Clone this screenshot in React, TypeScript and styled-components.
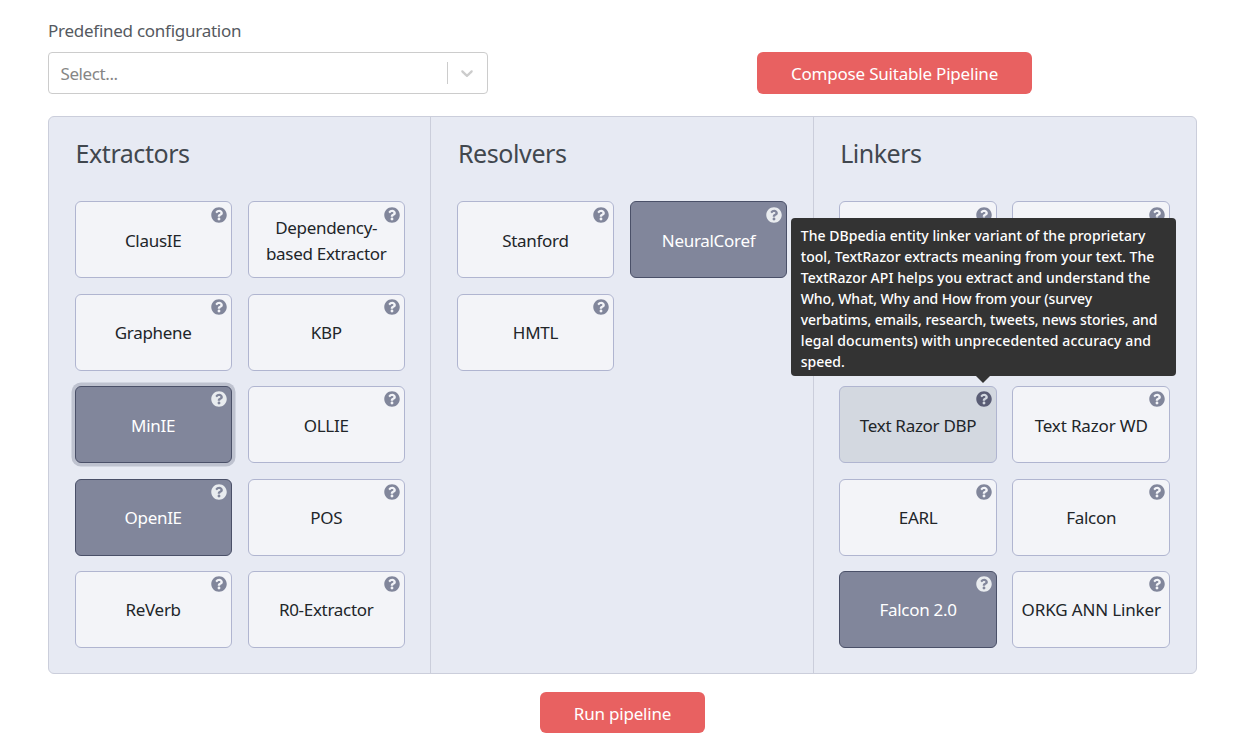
import React from "react";
import styled, { createGlobalStyle, css } from "styled-components";
import { FaQuestionCircle } from "react-icons/fa";

const GlobalStyle = createGlobalStyle`
  * { box-sizing: border-box; }
  body {
    margin: 0;
    background: #fff;
    color: #212529;
    font-family: "Noto Sans", "Open Sans", sans-serif;
    font-size: 17px;
  }
`;

const Page = styled.main`
  width: 1239px;
  height: 753px;
  padding: 17px 42px 0 48px;
  overflow: hidden;
  display: flex;
  flex-direction: column;
`;

const Toolbar = styled.div`
  display: flex;
  justify-content: space-between;
  align-items: flex-end;
  height: 77px;
  padding-right: 165px;
`;

const Field = styled.div`
  width: 440px;
`;

const Label = styled.label`
  display: block;
  height: 35px;
  line-height: 27px;
  color: #555960;
  letter-spacing: -0.26px;
`;

const Select = styled.div`
  display: flex;
  align-items: center;
  height: 42px;
  border: 1px solid #ccc;
  border-radius: 4px;
`;

const Placeholder = styled.span`
  flex: 1;
  padding-left: 11.5px;
  color: #868686;
  letter-spacing: -0.4px;
`;

const Separator = styled.span`
  width: 1px;
  height: 22px;
  background: #ccc;
`;

const Indicator = styled.svg`
  width: 20px;
  height: 20px;
  margin: 0 10px 0 9px;
  fill: #ccc;
`;

const Button = styled.button<{ $width: number; $height: number; $spacing: number }>`
  width: ${(p) => p.$width}px;
  height: ${(p) => p.$height}px;
  padding: 1px 0 0;
  border: 0;
  border-radius: 6px;
  background: #e86161;
  color: #fff;
  font: inherit;
  letter-spacing: ${(p) => p.$spacing}px;
`;

const Panel = styled.section`
  display: grid;
  grid-template-columns: repeat(3, 1fr);
  height: 558px;
  margin-top: 22px;
  border: 1px solid #cbcedb;
  border-radius: 6px;
  background: #e7eaf3;
`;

const Tiles = styled.div`
  display: grid;
  grid-template-columns: 1fr 1fr;
  grid-auto-rows: 77px;
  gap: 15.45px 16px;
`;

const Column = styled.div`
  padding: 17.2px 25.6px 0;
  &:not(:last-child) { border-right: 1px solid #cbcedb; }
  &:last-child { padding-right: 26px; }
  &:last-child ${Tiles} { column-gap: 15.6px; }
`;

const Heading = styled.h2<{ $spacing: number }>`
  height: 67px;
  margin: 0 0 0 1px;
  line-height: 38px;
  font-size: 25px;
  font-weight: 400;
  color: #41474e;
  letter-spacing: ${(p) => p.$spacing}px;
`;

type State = "idle" | "selected" | "hovered";

const Tile = styled.div<{ $state: State; $focus?: boolean; $spacing: number }>`
  position: relative;
  display: flex;
  align-items: center;
  justify-content: center;
  padding-top: 2px;
  border: 1px solid #b0b5d0;
  border-radius: 6px;
  background: #f3f4f8;
  line-height: 26px;
  text-align: center;
  white-space: pre;
  letter-spacing: ${(p) => p.$spacing}px;
  ${(p) => p.$state === "selected" && css`
    border-color: #4a5068;
    background: #81869b;
    color: #fff;
  `}
  ${(p) => p.$state === "hovered" && css`background: #d3d8e0;`}
  ${(p) => p.$focus && css`box-shadow: 0 0 0 3.5px #bec2cf;`}
`;

const Help = styled.span<{ $state: State }>`
  position: absolute;
  top: 4.36px;
  right: 4px;
  display: flex;
  font-size: 16px;
  color: ${(p) => ({ idle: "#81869b", selected: "#e9ecef", hovered: "#5a5d75" })[p.$state]};
`;

const Tooltip = styled.div`
  position: absolute;
  left: -49px;
  bottom: 86px;
  z-index: 2;
  width: 384.5px;
  height: 158px;
  padding: 6.5px 9.5px;
  border-radius: 4px;
  background: #333;
  color: #fff;
  font-size: 14px;
  font-weight: 500;
  line-height: 21px;
  text-align: left;
  &::after {
    content: "";
    position: absolute;
    top: 100%;
    left: 185px;
    border: 7px solid transparent;
    border-top-color: #333;
    border-bottom: 0;
  }
`;

const Line = styled.div<{ $spacing: number }>`
  letter-spacing: ${(p) => p.$spacing}px;
`;

const Footer = styled.div`
  display: flex;
  padding: 18px 0 0 492px;
`;

interface Tool { name: string; spacing?: number; state?: State; focus?: boolean; tip?: boolean }

const columns: { title: string; spacing: number; tools: Tool[] }[] = [
  { title: "Extractors", spacing: -0.45, tools: [
    { name: "ClausIE" }, { name: "Dependency-\nbased Extractor" },
    { name: "Graphene" }, { name: "KBP" },
    { name: "MinIE", state: "selected", focus: true }, { name: "OLLIE" },
    { name: "OpenIE", state: "selected" }, { name: "POS" },
    { name: "ReVerb" }, { name: "R0-Extractor" },
  ] },
  { title: "Resolvers", spacing: -0.4, tools: [
    { name: "Stanford" }, { name: "NeuralCoref", state: "selected" }, { name: "HMTL" },
  ] },
  { title: "Linkers", spacing: -0.5, tools: [
    { name: "" }, { name: "" }, { name: "" }, { name: "" },
    { name: "Text Razor DBP", state: "hovered", tip: true }, { name: "Text Razor WD", spacing: -0.15 },
    { name: "EARL" }, { name: "Falcon" },
    { name: "Falcon 2.0", state: "selected" }, { name: "ORKG ANN Linker", spacing: -0.15 },
  ] },
];

const tipLines: [string, number][] = [
  ["The DBpedia entity linker variant of the proprietary", 0.04],
  ["tool, TextRazor extracts meaning from your text. The", 0.04],
  ["TextRazor API helps you extract and understand the", 0.06],
  ["Who, What, Why and How from your (survey", -0.1],
  ["verbatims, emails, research, tweets, news stories, and", -0.06],
  ["legal documents) with unprecedented accuracy and", 0.1],
  ["speed.", 0],
];

export default function App() {
  return (
    <Page>
      <GlobalStyle />
      <Toolbar>
        <Field>
          <Label>Predefined configuration</Label>
          <Select>
            <Placeholder>Select...</Placeholder>
            <Separator />
            <Indicator viewBox="0 0 20 20">
              <path d="M4.516 7.548c0.436-0.446 1.043-0.481 1.576 0l3.908 3.747 3.908-3.747c0.533-0.481 1.141-0.446 1.574 0 0.436 0.445 0.408 1.197 0 1.615-0.406 0.418-4.695 4.502-4.695 4.502-0.217 0.223-0.502 0.335-0.787 0.335s-0.57-0.112-0.789-0.335c0 0-4.287-4.084-4.695-4.502s-0.436-1.17 0-1.615z" />
            </Indicator>
          </Select>
        </Field>
        <Button $width={275} $height={42} $spacing={-0.2}>Compose Suitable Pipeline</Button>
      </Toolbar>
      <Panel>
        {columns.map((column) => (
          <Column key={column.title}>
            <Heading $spacing={column.spacing}>{column.title}</Heading>
            <Tiles>
              {column.tools.map((tool, i) => (
                <Tile key={i} $state={tool.state ?? "idle"} $focus={tool.focus} $spacing={tool.spacing ?? -0.3}>
                  {tool.name}
                  <Help $state={tool.state ?? "idle"}><FaQuestionCircle /></Help>
                  {tool.tip && (
                    <Tooltip>
                      {tipLines.map(([text, spacing]) => <Line key={text} $spacing={spacing}>{text}</Line>)}
                    </Tooltip>
                  )}
                </Tile>
              ))}
            </Tiles>
          </Column>
        ))}
      </Panel>
      <Footer>
        <Button $width={165} $height={41} $spacing={-0.2}>Run pipeline</Button>
      </Footer>
    </Page>
  );
}
